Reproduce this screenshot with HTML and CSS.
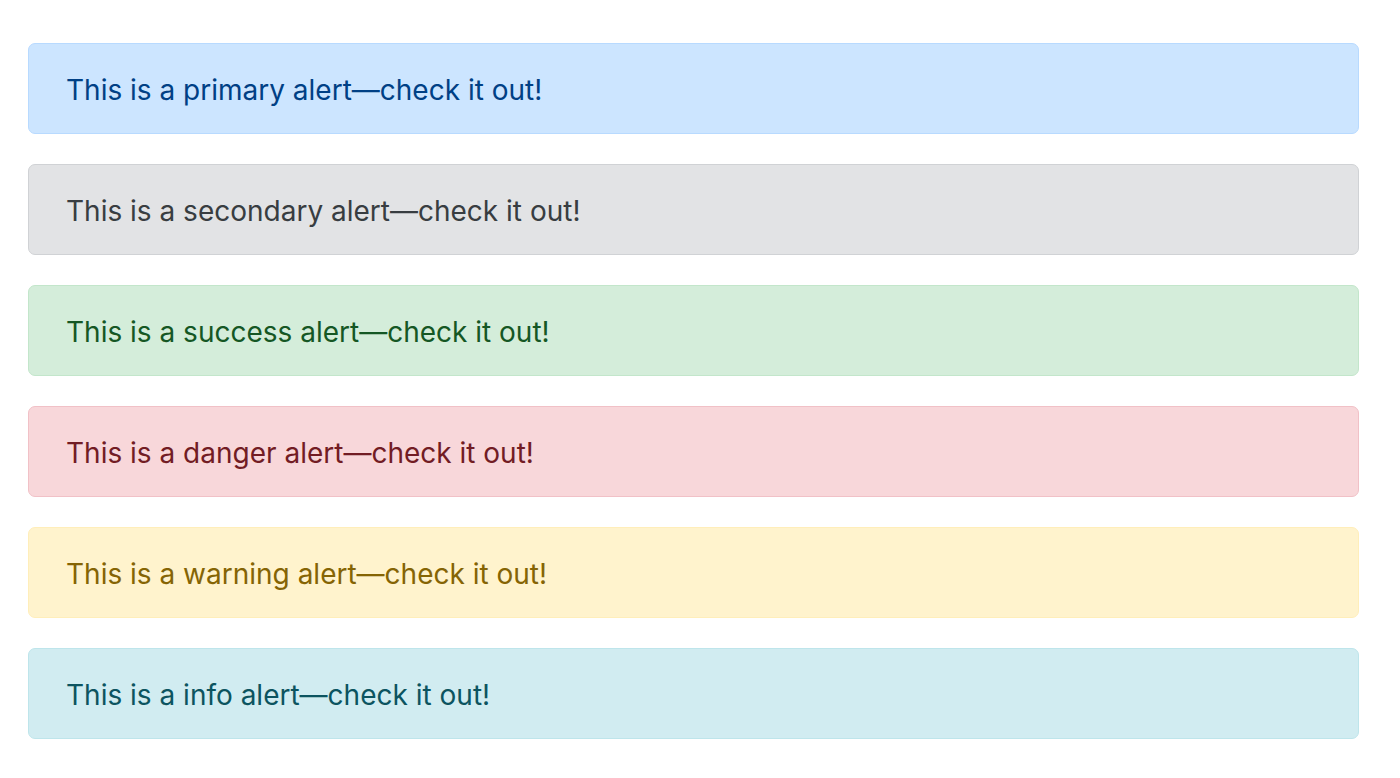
FILE: index.html
```html
<!DOCTYPE html>
<html lang="en">
<head>
<meta charset="utf-8">
<title>Alerts</title>
<link rel="stylesheet" href="styles.css">
</head>
<body>
<div class="alerts">
  <div class="alert alert-primary">This is a primary alert—check it out!</div>
  <div class="alert alert-secondary">This is a secondary alert—check it out!</div>
  <div class="alert alert-success">This is a success alert—check it out!</div>
  <div class="alert alert-danger">This is a danger alert—check it out!</div>
  <div class="alert alert-warning">This is a warning alert—check it out!</div>
  <div class="alert alert-info">This is a info alert—check it out!</div>
</div>
</body>
</html>
```
FILE: styles.css
```css
html, body {
  margin: 0;
  background: #fff;
}
body {
  font-family: Inter, "Noto Sans", "Liberation Sans", sans-serif;
}
.alerts {
  display: flex;
  flex-direction: column;
  gap: 30px;
  padding: 43px 41px 0 28px;
}
.alert {
  height: 91px;
  box-sizing: border-box;
  border: 1px solid;
  border-radius: 7px;
  padding: 2px 37px 0;
  display: flex;
  align-items: center;
  font-size: 28px;
}
.alert-primary { background: #cce5ff; border-color: #b8daff; color: #004085; }
.alert-secondary { background: #e2e3e5; border-color: #d0d2d5; color: #383d41; }
.alert-success { background: #d4edda; border-color: #c3e6cb; color: #155724; }
.alert-danger { background: #f8d7da; border-color: #f1c1c7; color: #721c24; }
.alert-warning { background: #fff3cd; border-color: #ffeeba; color: #856404; }
.alert-info { background: #d1ecf1; border-color: #bee5eb; color: #0c5460; }
```
